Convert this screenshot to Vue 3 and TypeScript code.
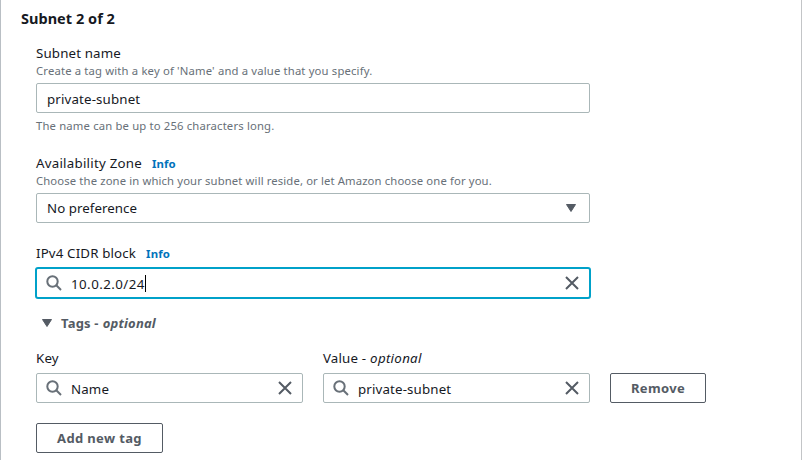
<script setup lang="ts">
import { ref } from 'vue'

const name = ref('private-subnet')
const zone = ref('No preference')
const cidr = ref('10.0.2.0/24')
const tag = ref({ key: 'Name', value: 'private-subnet' })
</script>

<template>
  <main class="panel">
    <h3 class="title">Subnet 2 of 2</h3>
    <div class="form">
      <section class="field">
        <div class="label">Subnet name</div>
        <div class="hint">Create a tag with a key of 'Name' and a value that you specify.</div>
        <div class="control wide"><span class="value">{{ name }}</span></div>
        <div class="constraint">The name can be up to 256 characters long.</div>
      </section>

      <section class="field zone">
        <div class="label"><span class="zone-label">Availability Zone</span><a class="info">Info</a></div>
        <div class="hint zone-hint">Choose the zone in which your subnet will reside, or let Amazon choose one for you.</div>
        <div class="control wide">
          <span class="value selected">{{ zone }}</span>
          <svg class="arrow end" viewBox="0 0 10 8"><path d="M.5.5h9L5 7.5z" /></svg>
        </div>
      </section>

      <section class="field cidr">
        <div class="label"><span>IPv4 CIDR block</span><a class="info">Info</a></div>
        <div class="control wide focused">
          <svg class="search" viewBox="0 0 16 16"><circle cx="6.5" cy="6.5" r="5.2" /><path d="m10.3 10.3 4.7 4.7" /></svg>
          <span class="value address">{{ cidr }}</span><i class="caret"></i>
          <svg class="clear" viewBox="0 0 16 16"><path d="m2 2 12 12M14 2 2 14" /></svg>
        </div>
      </section>

      <div class="expander">
        <svg class="arrow" viewBox="0 0 10 8"><path d="M.5.5h9L5 7.5z" /></svg>
        <span class="tags-title">Tags -</span><em class="tags-optional">optional</em>
      </div>

      <div class="tag-row">
        <section>
          <div class="label">Key</div>
          <div class="control">
            <svg class="search" viewBox="0 0 16 16"><circle cx="6.5" cy="6.5" r="5.2" /><path d="m10.3 10.3 4.7 4.7" /></svg>
            <span class="value">{{ tag.key }}</span>
            <svg class="clear" viewBox="0 0 16 16"><path d="m2 2 12 12M14 2 2 14" /></svg>
          </div>
        </section>
        <section>
          <div class="label"><span>Value -</span><em class="value-optional">optional</em></div>
          <div class="control">
            <svg class="search" viewBox="0 0 16 16"><circle cx="6.5" cy="6.5" r="5.2" /><path d="m10.3 10.3 4.7 4.7" /></svg>
            <span class="value">{{ tag.value }}</span>
            <svg class="clear" viewBox="0 0 16 16"><path d="m2 2 12 12M14 2 2 14" /></svg>
          </div>
        </section>
        <button class="remove">Remove</button>
      </div>
      <button class="add">Add new tag</button>
    </div>
  </main>
</template>

<style>
body {
  background: #fff;
}
</style>

<style scoped>
* {
  box-sizing: border-box;
}
.panel {
  height: 460px;
  overflow: hidden;
  padding: 7px 20px 0;
  border-left: 1px solid #b9bfc4;
  border-right: 1px solid #c3c5c7;
  font-family: "Noto Sans", sans-serif;
  font-size: 13.3px;
  line-height: 20px;
  letter-spacing: 0.15px;
  color: #16191f;
  white-space: nowrap;
}
.title {
  margin: 0;
  height: 22px;
  line-height: 22px;
  font-size: 14.5px;
  font-weight: 700;
  letter-spacing: 0.03px;
}
.form {
  padding: 14px 0 0 15px;
}
.label {
  display: flex;
  height: 20px;
}
.zone-label {
  letter-spacing: 0.24px;
}
.hint,
.constraint {
  height: 16px;
  line-height: 16px;
  font-size: 11.3px;
  letter-spacing: 0.155px;
  color: #687078;
}
.hint {
  margin-bottom: 4px;
}
.zone-hint {
  letter-spacing: 0.12px;
}
.constraint {
  margin-top: 5px;
}
.info {
  margin-left: 10px;
  font-size: 11.4px;
  font-weight: 700;
  letter-spacing: 0.1px;
  color: #0073bb;
  line-height: 21px;
}
.control {
  display: flex;
  align-items: center;
  width: 267px;
  height: 30px;
  padding: 0 9px 0 10px;
  border: 1px solid #aab7b8;
  border-radius: 2px;
  background: #fff;
}
.control.wide {
  width: 554px;
}
.value {
  position: relative;
  top: 1px;
}
.value.selected {
  top: 0;
  letter-spacing: 0.05px;
}
.value.address {
  letter-spacing: 0.45px;
}
.zone {
  margin-top: 19px;
}
.cidr {
  margin-top: 20px;
}
.control.wide.focused {
  width: 556px;
  height: 32px;
  margin: 4px 0 0 -1px;
  padding: 0 9px 0 10px;
  border: 2px solid #00a1c9;
  border-radius: 3px;
}
.search {
  flex: none;
  width: 16px;
  height: 16px;
  margin-left: -1px;
  margin-right: 9px;
  fill: none;
  stroke: #687078;
  stroke-width: 2;
}
.clear {
  flex: none;
  width: 16px;
  height: 16px;
  margin-left: auto;
  fill: none;
  stroke: #545b64;
  stroke-width: 2;
}
.caret {
  width: 1px;
  height: 17px;
  background: #000;
}
.arrow {
  width: 10px;
  height: 8px;
  fill: #545b64;
  stroke: #545b64;
  stroke-linejoin: round;
}
.end {
  margin-left: auto;
  margin-right: 4px;
}
.expander {
  display: flex;
  align-items: center;
  height: 20px;
  margin-top: 14px;
  padding-left: 6px;
  font-size: 13px;
  font-weight: 700;
  letter-spacing: 0.2px;
  color: #545b64;
}
.tags-title {
  margin-left: 9px;
  margin-right: 4px;
}
.tag-row {
  display: flex;
  align-items: flex-end;
  gap: 20px;
  margin-top: 15px;
}
.tag-row .label {
  height: 25px;
}
.value-optional {
  margin-left: 4px;
  letter-spacing: 0.3px;
}
button {
  display: flex;
  align-items: center;
  justify-content: center;
  height: 30px;
  padding: 0;
  border: 1px solid #545b64;
  border-radius: 2px;
  background: #fff;
  font-family: inherit;
  font-size: 13px;
  font-weight: 700;
  line-height: 20px;
  letter-spacing: 0.35px;
  color: #545b64;
}
.remove {
  width: 96px;
}
.add {
  width: 127px;
  margin-top: 20px;
}
</style>
